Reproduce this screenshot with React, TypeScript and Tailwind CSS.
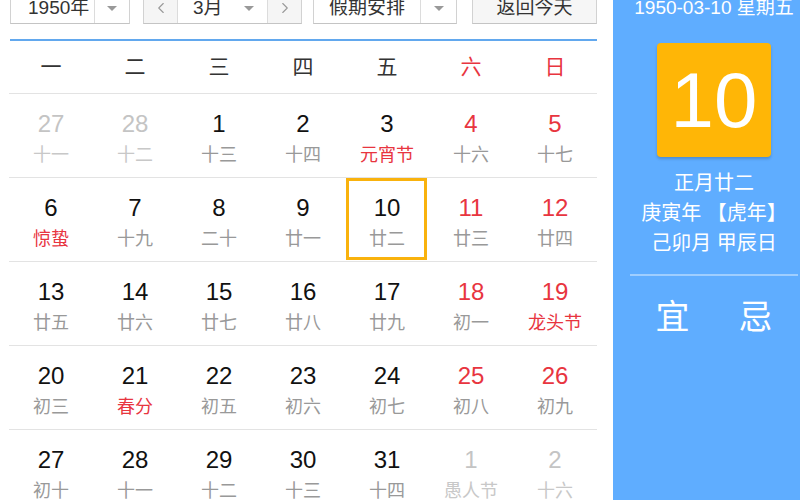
import { ChevronLeft, ChevronRight } from 'lucide-react';

interface Day {
    d: number;
    l: string;
    other?: boolean; // day of the previous / next month
    fest?: boolean; // festival or solar term, lunar label in red
    today?: boolean;
}

const WEEKDAYS = ['一', '二', '三', '四', '五', '六', '日'];

const WEEKS: Day[][] = [
    [
        { d: 27, l: '十一', other: true },
        { d: 28, l: '十二', other: true },
        { d: 1, l: '十三' },
        { d: 2, l: '十四' },
        { d: 3, l: '元宵节', fest: true },
        { d: 4, l: '十六' },
        { d: 5, l: '十七' },
    ],
    [
        { d: 6, l: '惊蛰', fest: true },
        { d: 7, l: '十九' },
        { d: 8, l: '二十' },
        { d: 9, l: '廿一' },
        { d: 10, l: '廿二', today: true },
        { d: 11, l: '廿三' },
        { d: 12, l: '廿四' },
    ],
    [
        { d: 13, l: '廿五' },
        { d: 14, l: '廿六' },
        { d: 15, l: '廿七' },
        { d: 16, l: '廿八' },
        { d: 17, l: '廿九' },
        { d: 18, l: '初一' },
        { d: 19, l: '龙头节', fest: true },
    ],
    [
        { d: 20, l: '初三' },
        { d: 21, l: '春分', fest: true },
        { d: 22, l: '初五' },
        { d: 23, l: '初六' },
        { d: 24, l: '初七' },
        { d: 25, l: '初八' },
        { d: 26, l: '初九' },
    ],
    [
        { d: 27, l: '初十' },
        { d: 28, l: '十一' },
        { d: 29, l: '十二' },
        { d: 30, l: '十三' },
        { d: 31, l: '十四' },
        { d: 1, l: '愚人节', other: true },
        { d: 2, l: '十六', other: true },
    ],
];

function Caret() {
    return <span className="w-0 h-0 border-x-[5px] border-x-transparent border-t-[5px] border-t-[#999]" />;
}

function DayCell({ day, col }: { day: Day; col: number }) {
    const weekend = col >= 5;
    const numColor = day.other ? 'text-[#c4c4c4]' : weekend ? 'text-[#e8353f]' : 'text-[#111]';
    const lunarColor = day.other ? 'text-[#c8c8c8]' : day.fest ? 'text-[#e8353f]' : 'text-[#999]';

    return (
        <div className="relative flex flex-col items-center pt-[16px]">
            {day.today && (
                <div className="absolute left-[1px] right-[2px] top-0 bottom-[1px] border-[3px] border-[#f9b20d]" />
            )}
            <span className={`text-[24px] leading-[28px] ${numColor}`}>{day.d}</span>
            <span className={`mt-[6px] text-[18px] leading-[22px] ${lunarColor}`}>{day.l}</span>
        </div>
    );
}

export default function App() {
    return (
        <div className="w-[800px] h-[500px] overflow-hidden bg-white font-['Liberation_Sans','Noto_Sans_CJK_SC',sans-serif]">
            <div className="flex w-[815px] h-[500px]">
                {/* Left: month grid */}
                <div className="w-[613px] shrink-0 pl-[9px] pr-[16px]">
                    {/* Controls */}
                    <div className="-mt-[8px] flex h-[32px] text-[19px] text-[#333]">
                        <div className="ml-[1px] w-[120px] flex border border-[#d2d2d2] border-b-[#c4c4c4] bg-white">
                            <div className="flex-1 flex items-center pl-[17px]">1950年</div>
                            <div className="w-[35px] border-l border-[#dcdcdc] flex items-center justify-center">
                                <Caret />
                            </div>
                        </div>

                        <div className="ml-[13px] w-[159px] flex border border-[#d2d2d2] border-b-[#c4c4c4] bg-white">
                            <div className="w-[34px] bg-[#f5f5f5] border-r border-[#dcdcdc] flex items-center justify-center">
                                <ChevronLeft size={18} strokeWidth={1.5} className="text-[#999]" />
                            </div>
                            <div className="flex-1 flex items-center pl-[15px] pr-[13px] justify-between">
                                <span>3月</span>
                                <Caret />
                            </div>
                            <div className="w-[34px] bg-[#f5f5f5] border-l border-[#dcdcdc] flex items-center justify-center">
                                <ChevronRight size={18} strokeWidth={1.5} className="text-[#999]" />
                            </div>
                        </div>

                        <div className="ml-[11px] w-[144px] flex border border-[#d2d2d2] border-b-[#c4c4c4] bg-white">
                            <div className="flex-1 flex items-center justify-center">假期安排</div>
                            <div className="w-[36px] border-l border-[#dcdcdc] flex items-center justify-center">
                                <Caret />
                            </div>
                        </div>

                        <div className="ml-[15px] w-[125px] flex items-center justify-center border border-[#d2d2d2] border-b-[#c4c4c4] bg-[#f6f6f6]">
                            返回今天
                        </div>
                    </div>

                    <div className="mt-[15px] ml-[1px] h-[2px] bg-[#62a8ee]" />

                    <div className="w-[588px]">
                        <div className="grid grid-cols-7 h-[53px] border-b border-[#e3e3e3] text-[21px]">
                            {WEEKDAYS.map((w, i) => (
                                <div
                                    key={w}
                                    className={`flex items-center justify-center ${i >= 5 ? 'text-[#e8353f]' : 'text-[#333]'}`}
                                >
                                    {w}
                                </div>
                            ))}
                        </div>

                        {WEEKS.map((week, wi) => (
                            <div key={wi} className="grid grid-cols-7 h-[84px] border-b border-[#e3e3e3]">
                                {week.map((day, di) => (
                                    <DayCell key={di} day={day} col={di} />
                                ))}
                            </div>
                        ))}
                    </div>
                </div>

                {/* Right: selected day detail */}
                <div className="w-[202px] shrink-0 h-[500px] bg-[#5fadff] flex flex-col items-center text-white">
                    <div className="-mt-[3px] text-[19px] leading-[22px]">1950-03-10 星期五</div>

                    <div className="mt-[24px] w-[114px] h-[114px] rounded-[4px] bg-[#ffb606] shadow-[0_2px_3px_rgba(0,0,0,0.18)] flex items-center justify-center">
                        <span className="text-[78px] leading-none">10</span>
                    </div>

                    <div className="mt-[11px] flex flex-col items-center text-[20px] leading-[30px]">
                        <span>正月廿二</span>
                        <span>庚寅年 【虎年】</span>
                        <span>己卯月 甲辰日</span>
                    </div>

                    <div className="mt-[16px] w-[168px] h-[2px] bg-white/40" />

                    <div className="mt-[21px] flex gap-[49px] text-[34px] leading-[40px]">
                        <span>宜</span>
                        <span>忌</span>
                    </div>
                </div>
            </div>
        </div>
    );
}
